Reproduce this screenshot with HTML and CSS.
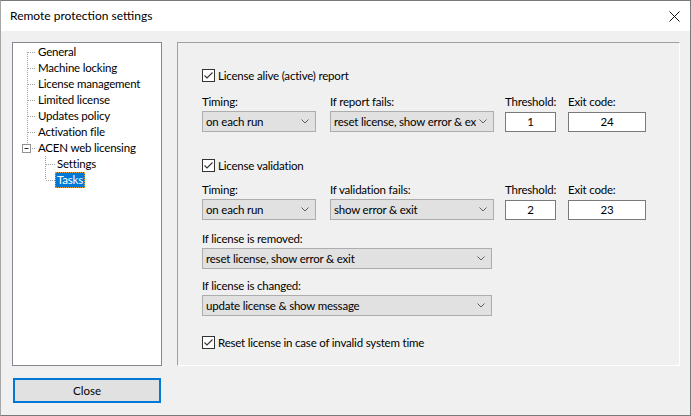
FILE: index.html
```html
<!DOCTYPE html>
<html>
<head>
<meta charset="utf-8">
<link rel="stylesheet" href="styles.css">
</head>
<body>
<div class="window">
  <div class="titlebar">
    <span class="title">Remote protection settings</span>
    <svg class="close-x" width="11" height="11" viewBox="0 0 11 11"><path d="M0.5 0.5 L10.5 10.5 M10.5 0.5 L0.5 10.5" stroke="#111" stroke-width="1" fill="none"/></svg>
  </div>
  <div class="body">
    <div class="main">
      <div class="tree">
        <div class="node"><svg class="conn" width="23" height="16"><path d="M14.5 8 V16 M15 8.5 H23" class="dots"/></svg><span class="label">General</span></div>
        <div class="node"><svg class="conn" width="23" height="16"><path d="M14.5 0 V16 M15 8.5 H23" class="dots"/></svg><span class="label">Machine locking</span></div>
        <div class="node"><svg class="conn" width="23" height="16"><path d="M14.5 0 V16 M15 8.5 H23" class="dots"/></svg><span class="label">License management</span></div>
        <div class="node"><svg class="conn" width="23" height="16"><path d="M14.5 0 V16 M15 8.5 H23" class="dots"/></svg><span class="label">Limited license</span></div>
        <div class="node"><svg class="conn" width="23" height="16"><path d="M14.5 0 V16 M15 8.5 H23" class="dots"/></svg><span class="label">Updates policy</span></div>
        <div class="node"><svg class="conn" width="23" height="16"><path d="M14.5 0 V16 M15 8.5 H23" class="dots"/></svg><span class="label">Activation file</span></div>
        <div class="node"><svg class="conn" width="23" height="16"><path d="M14.5 0 V4 M19 8.5 H23" class="dots"/><rect x="9.5" y="4.5" width="8" height="8" fill="#fff" stroke="#919191"/><path d="M11.5 8.5 H15.5" stroke="#2b2b2b"/></svg><span class="label">ACEN web licensing</span></div>
        <div class="node"><svg class="conn" width="42" height="16"><path d="M32.5 0 V16 M33 8.5 H42" class="dots"/></svg><span class="label">Settings</span></div>
        <div class="node"><svg class="conn" width="42" height="16"><path d="M32.5 0 V8 M33 8.5 H42" class="dots"/></svg><span class="label selected">Tasks</span></div>
      </div>
      <div class="panel">
        <div class="check-row sec1">
          <svg class="cb" width="13" height="13" viewBox="0 0 13 13"><rect x="0.5" y="0.5" width="12" height="12" fill="#fff" stroke="#333"/><path d="M2.5 6.5 L5 9 L10.5 3.5" fill="none" stroke="#333" stroke-width="1.1"/></svg>
          <span>License alive (active) report</span>
        </div>
        <div class="fields row1">
          <span class="lbl">Timing:</span>
          <span class="lbl">If report fails:</span>
          <span class="lbl">Threshold:</span>
          <span class="lbl">Exit code:</span>
          <div class="select w-timing"><span class="val">on each run</span><span class="arrow"><svg width="8" height="5" viewBox="0 0 8 5"><path d="M0.5 0.5 L4 4 L7.5 0.5" fill="none" stroke="#606060"/></svg></span></div>
          <div class="select w-fail"><span class="val">reset license, show error &amp; exit</span><span class="arrow"><svg width="8" height="5" viewBox="0 0 8 5"><path d="M0.5 0.5 L4 4 L7.5 0.5" fill="none" stroke="#606060"/></svg></span></div>
          <div class="edit w-thr">1</div>
          <div class="edit w-exit">24</div>
        </div>

        <div class="check-row sec2">
          <svg class="cb" width="13" height="13" viewBox="0 0 13 13"><rect x="0.5" y="0.5" width="12" height="12" fill="#fff" stroke="#333"/><path d="M2.5 6.5 L5 9 L10.5 3.5" fill="none" stroke="#333" stroke-width="1.1"/></svg>
          <span>License validation</span>
        </div>
        <div class="fields row2">
          <span class="lbl">Timing:</span>
          <span class="lbl">If validation fails:</span>
          <span class="lbl">Threshold:</span>
          <span class="lbl">Exit code:</span>
          <div class="select w-timing"><span class="val">on each run</span><span class="arrow"><svg width="8" height="5" viewBox="0 0 8 5"><path d="M0.5 0.5 L4 4 L7.5 0.5" fill="none" stroke="#606060"/></svg></span></div>
          <div class="select w-fail"><span class="val">show error &amp; exit</span><span class="arrow"><svg width="8" height="5" viewBox="0 0 8 5"><path d="M0.5 0.5 L4 4 L7.5 0.5" fill="none" stroke="#606060"/></svg></span></div>
          <div class="edit w-thr">2</div>
          <div class="edit w-exit">23</div>
        </div>

        <div class="field removed">
          <span class="lbl">If license is removed:</span>
          <div class="select w-full"><span class="val">reset license, show error &amp; exit</span><span class="arrow"><svg width="8" height="5" viewBox="0 0 8 5"><path d="M0.5 0.5 L4 4 L7.5 0.5" fill="none" stroke="#606060"/></svg></span></div>
        </div>

        <div class="field changed">
          <span class="lbl">If license is changed:</span>
          <div class="select w-full"><span class="val">update license &amp; show message</span><span class="arrow"><svg width="8" height="5" viewBox="0 0 8 5"><path d="M0.5 0.5 L4 4 L7.5 0.5" fill="none" stroke="#606060"/></svg></span></div>
        </div>

        <div class="check-row sec3">
          <svg class="cb" width="13" height="13" viewBox="0 0 13 13"><rect x="0.5" y="0.5" width="12" height="12" fill="#fff" stroke="#333"/><path d="M2.5 6.5 L5 9 L10.5 3.5" fill="none" stroke="#333" stroke-width="1.1"/></svg>
          <span>Reset license in case of invalid system time</span>
        </div>
      </div>
    </div>
    <div class="buttons">
      <button class="btn">Close</button>
    </div>
  </div>
</div>
</body>
</html>
```

FILE: styles.css
```css
html, body {
  margin: 0;
  padding: 0;
  background: #f0f0f0;
}
body {
  font-family: Lato, "Noto Sans", sans-serif;
  font-size: 11.5px;
  letter-spacing: -0.2px;
  color: #000;
}
.window {
  width: 691px;
  height: 416px;
  box-sizing: border-box;
  border: 1px solid #7a7a7a;
  border-left-color: #a6a6a6;
  display: flex;
  flex-direction: column;
  overflow: hidden;
}
.titlebar {
  height: 30px;
  background: #fff;
  display: flex;
  align-items: center;
  justify-content: space-between;
  padding: 0 10px 0 9px;
  flex: none;
}
.title {
  font-size: 12px;
  letter-spacing: 0;
  line-height: 16px;
}
.close-x {
  display: block;
}
.body {
  flex: 1;
  background: #f0f0f0;
  padding: 11px 0 0 11px;
  display: flex;
  flex-direction: column;
}
.main {
  display: flex;
  gap: 15px;
  height: 324px;
}
.tree {
  width: 150px;
  box-sizing: border-box;
  border: 1px solid #828790;
  background: #fff;
  padding-top: 1px;
}
.node {
  display: flex;
  height: 16px;
  align-items: center;
}
.conn {
  display: block;
  flex: none;
}
.dots {
  fill: none;
  stroke: #a0a0a0;
  stroke-width: 1;
  stroke-dasharray: 1 1;
}
.label {
  line-height: 14px;
  border: 1px solid transparent;
  padding: 0 1px;
  white-space: nowrap;
}
.label.selected {
  background: #0078d7;
  color: #fff;
  border: 1px dotted #e8a030;
}
.panel {
  width: 503px;
  box-sizing: border-box;
  border: 1px solid #a0a0a0;
  border-right-color: #fff;
  border-bottom-color: #fff;
  padding: 26px 0 0 24px;
}
.check-row {
  display: flex;
  align-items: center;
  height: 13px;
  line-height: 13px;
  gap: 3px;
  white-space: nowrap;
}
.cb {
  display: block;
  flex: none;
}
.sec2 { margin-top: 27px; }
.sec3 { margin-top: 20px; }
.fields {
  display: grid;
  grid-template-columns: 128px 175px 63px 78px;
  grid-template-rows: 16px 21px;
  row-gap: 1px;
  align-items: center;
}
.row1 { margin-top: 12px; }
.row2 { margin-top: 10px; }
.lbl {
  line-height: 16px;
  height: 16px;
  white-space: nowrap;
}
.field {
  display: flex;
  flex-direction: column;
  gap: 1px;
}
.removed { margin-top: 11px; }
.changed { margin-top: 9px; }
.select {
  height: 21px;
  box-sizing: border-box;
  border: 1px solid #adadad;
  background: #e1e1e1;
  display: flex;
  align-items: center;
  padding-left: 3px;
}
.val {
  flex: 1;
  overflow: hidden;
  white-space: nowrap;
  line-height: 16px;
}
.arrow {
  flex: none;
  width: 17px;
  display: flex;
  justify-content: flex-end;
  padding-right: 6px;
  box-sizing: border-box;
}
.arrow svg { display: block; }
.w-timing { width: 114px; }
.w-fail { width: 164px; }
.w-full { width: 290px; }
.edit {
  height: 20px;
  box-sizing: border-box;
  border: 1px solid #7a7a7a;
  background: #fff;
  text-align: center;
  line-height: 18px;
}
.w-thr { width: 51px; }
.w-exit { width: 78px; }
.buttons {
  margin-top: 12px;
  padding-left: 1px;
}
.btn {
  width: 148px;
  height: 25px;
  box-sizing: border-box;
  border: 2px solid #0078d7;
  background: #e1e1e1;
  font: inherit;
  color: #000;
  padding: 0;
  display: block;
}
```
